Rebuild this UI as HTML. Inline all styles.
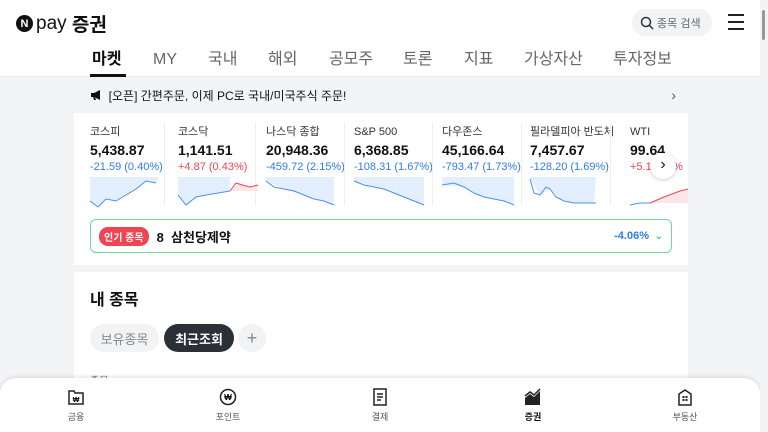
<!DOCTYPE html>
<html><head><meta charset="utf-8"><style>
*{margin:0;padding:0;box-sizing:border-box}
body{width:768px;height:432px;overflow:hidden;background:#f3f4f6;font-family:"Liberation Sans","Noto Sans CJK KR",sans-serif;color:#111;position:relative}
.hdr{position:absolute;left:0;top:0;width:760px;height:77px;background:#fff;border-bottom:1px solid #e8e9eb}
.logo{position:absolute;left:16px;top:10px;display:flex;align-items:center;font-size:19px;font-weight:bold}
.logo .n{width:17px;height:17px;border-radius:50%;background:#111;color:#fff;font-size:11px;display:flex;align-items:center;justify-content:center;margin-right:3px}
.search{position:absolute;left:632px;top:9px;width:80px;height:27px;border-radius:14px;background:#f2f3f5;font-size:11px;color:#666;display:flex;align-items:center;padding-left:8px}
.menu{position:absolute;left:728px;top:14px;width:16px}
.menu i{display:block;height:2px;background:#222;margin-bottom:5px}
.tabs{position:absolute;top:50px;left:0;font-size:16px;color:#666}
.tabs span{position:absolute;white-space:nowrap;display:block;line-height:20px;top:0}
.tabs .on{color:#111;font-weight:bold}
.uline{position:absolute;left:90px;top:74px;width:36px;height:3px;background:#111}
.banner{position:absolute;left:74px;top:80px;width:614px;height:30px;font-size:12px;display:flex;align-items:center;padding-left:16px}
.card{position:absolute;left:74px;background:#fff;width:614px}
.idx{position:absolute;top:12px;font-size:11px;line-height:14px}
.idx .nm{color:#333}
.idx .v{font-size:14px;font-weight:bold;margin-top:3px;line-height:16px}
.idx .c{margin-top:2px}
.blue{color:#2f7be9}.red{color:#f04452}
.sep{position:absolute;top:10px;width:1px;height:82px;background:#eee}
.pop{position:absolute;left:16px;top:106px;width:582px;height:34px;border:1px solid #6fd89a;border-radius:6px;display:flex;align-items:center;padding-left:8px;font-size:13px;font-weight:bold}
.badge{background:#f04452;color:#fff;font-size:10px;padding:2px 5px;border-radius:9px;margin-right:8px}
.chip{position:absolute;top:52px;height:28px;border-radius:14px;font-size:13px;display:flex;align-items:center;justify-content:center}
.nav{position:absolute;left:0;top:378px;width:760px;height:54px;background:#fff;border-radius:16px 16px 0 0;box-shadow:0 -1px 4px rgba(0,0,0,.12)}
.ni{position:absolute;top:10px;width:60px;text-align:center;font-size:9px;color:#555}
.ni svg{display:block;margin:0 auto 4px}
.sb{position:absolute;left:760px;top:0;width:8px;height:432px;background:#f3f4f6}
.sb i{position:absolute;left:2px;top:10px;width:3px;height:30px;background:#999;border-radius:2px}
</style></head><body>
<div class="hdr">
 <div class="logo"><div class="n">N</div><span style="font-weight:normal">pay</span>&nbsp;증권</div>
 <div class="search"><svg width="14" height="14" viewBox="0 0 14 14"><circle cx="6" cy="6" r="4.5" fill="none" stroke="#333" stroke-width="1.5"/><path d="M9.3 9.3L13 13" stroke="#333" stroke-width="1.5"/></svg>&nbsp;종목 검색</div>
 <div class="menu"><i></i><i></i><i></i></div>
 <div class="tabs">
  <span class="on" style="left:92px">마켓</span><span style="left:153px">MY</span><span style="left:208px">국내</span><span style="left:268px">해외</span><span style="left:329px">공모주</span><span style="left:403px">토론</span><span style="left:464px">지표</span><span style="left:524px">가상자산</span><span style="left:613px">투자정보</span>
 </div>
 <div class="uline"></div>
</div>
<div class="banner"><svg width="12" height="12" viewBox="0 0 12 12"><path d="M1 4h3l6-3v10L4 8H1z M3 8l1 3h2L5 8z" fill="#111"/></svg>&nbsp;&nbsp;[오픈] 간편주문, 이제 PC로 국내/미국주식 주문!<span style="position:absolute;right:12px;font-size:14px;color:#555">›</span></div>
<div class="card" style="top:113px;height:152px">
 <div class="idx" style="left:16px"><div class="nm">코스피</div><div class="v">5,438.87</div><div class="c blue">-21.59 (0.40%)</div></div>
 <div class="sep" style="left:90px"></div>
 <div class="idx" style="left:104px"><div class="nm">코스닥</div><div class="v">1,141.51</div><div class="c red">+4.87 (0.43%)</div></div>
 <div class="sep" style="left:181px"></div>
 <div class="idx" style="left:192px"><div class="nm">나스닥 종합</div><div class="v">20,948.36</div><div class="c blue">-459.72 (2.15%)</div></div>
 <div class="sep" style="left:270px"></div>
 <div class="idx" style="left:280px"><div class="nm">S&amp;P 500</div><div class="v">6,368.85</div><div class="c blue">-108.31 (1.67%)</div></div>
 <div class="sep" style="left:358px"></div>
 <div class="idx" style="left:368px"><div class="nm">다우존스</div><div class="v">45,166.64</div><div class="c blue">-793.47 (1.73%)</div></div>
 <div class="sep" style="left:447px"></div>
 <div class="idx" style="left:456px"><div class="nm">필라델피아 반도체</div><div class="v">7,457.67</div><div class="c blue">-128.20 (1.69%)</div></div>
 <div class="sep" style="left:536px"></div>
 <div class="idx" style="left:556px"><div class="nm">WTI</div><div class="v">99.64</div><div class="c red">+5.1&nbsp;&nbsp;&nbsp;&nbsp;&nbsp;6%</div></div>
 <svg style="position:absolute;left:0;top:64px" width="614" height="32">
  <g fill="#e3efff" stroke="#4a90ea" stroke-width="1">
   <path d="M16 24 L24 30 L32 22 L42 24 L52 18 L62 12 L72 4 L82 6 L84 4 L84 0 L16 0Z" stroke="none"/>
   <polyline fill="none" points="16,24 24,30 32,22 42,24 52,18 62,12 72,4 82,6"/>
   <path d="M104 18 L112 28 L122 20 L132 18 L144 16 L156 14 L156 0 L104 0Z" stroke="none"/>
   <polyline fill="none" points="104,18 112,28 122,20 132,18 144,16 156,14"/>
   <path d="M192 4 L210 12 L230 18 L250 24 L260 28 L260 0 L192 0Z" stroke="none"/>
   <polyline fill="none" points="192,4 200,10 210,12 220,14 230,18 240,22 250,24 260,28"/>
   <path d="M280 4 L300 10 L320 16 L340 24 L350 28 L350 0 L280 0Z" stroke="none"/>
   <polyline fill="none" points="280,4 290,8 300,10 310,12 320,16 330,20 340,24 350,28"/>
   <path d="M368 8 L390 10 L410 20 L430 24 L440 28 L440 0 L368 0Z" stroke="none"/>
   <polyline fill="none" points="368,8 380,6 390,10 400,16 410,20 420,22 430,24 440,28"/>
   <path d="M456 2 L466 18 L476 12 L486 22 L500 26 L520 26 L522 0 L456 0Z" stroke="none"/>
   <polyline fill="none" points="456,2 460,16 466,18 472,10 476,12 482,20 490,24 500,26 510,26 522,26"/>
   <polyline fill="none" points="556,28 566,26 576,26"/>
  </g>
  <path d="M156 14 L166 6 L176 10 L184 8 L184 14Z" fill="#fde6e8"/>
  <polyline fill="none" stroke="#f04452" points="156,14 162,6 168,8 176,10 184,8"/>
  <path d="M576 26 L590 20 L606 14 L614 12 L614 26Z" fill="#fde6e8"/>
  <polyline fill="none" stroke="#f04452" points="576,26 590,20 606,14 614,12"/>
 </svg>
 <div style="position:absolute;left:576px;top:40px;width:26px;height:26px;border-radius:50%;background:#fff;box-shadow:0 1px 4px rgba(0,0,0,.2);text-align:center;line-height:24px;font-size:16px">›</div>
 <div class="pop"><span class="badge">인기 종목</span>8&nbsp;&nbsp;삼천당제약<span class="blue" style="position:absolute;right:22px;font-size:11px">-4.06%</span><span style="position:absolute;right:8px;color:#4fd083;font-size:10px">⌄</span></div>
</div>
<div class="card" style="top:272px;height:110px">
 <div style="position:absolute;left:16px;top:14px;font-size:16px;font-weight:bold">내 종목</div>
 <div class="chip" style="left:16px;width:69px;background:#f2f3f5;color:#888">보유종목</div>
 <div class="chip" style="left:90px;width:70px;background:#2b2f36;color:#fff;font-weight:bold">최근조회</div>
 <div class="chip" style="left:164px;width:28px;background:#f2f3f5;color:#888;font-size:18px">+</div>
 <div style="position:absolute;left:16px;top:100px;font-size:10px;color:#777">종목</div>
</div>
<div class="nav">
 <div class="ni" style="left:46px"><svg width="18" height="18" viewBox="0 0 18 18"><path d="M2 3h5l1 2h8v11H2z" fill="none" stroke="#222" stroke-width="1.5"/><text x="9" y="14" font-size="7" text-anchor="middle" font-weight="bold">₩</text></svg>금융</div>
 <div class="ni" style="left:198px"><svg width="18" height="18" viewBox="0 0 18 18"><circle cx="9" cy="9" r="7.5" fill="none" stroke="#222" stroke-width="1.5"/><text x="9" y="12" font-size="8" text-anchor="middle" font-weight="bold">₩</text></svg>포인트</div>
 <div class="ni" style="left:350px"><svg width="18" height="18" viewBox="0 0 18 18"><path d="M3 1h12v16H3z M6 6h6M6 9h6M6 12h4" fill="none" stroke="#222" stroke-width="1.5"/></svg>결제</div>
 <div class="ni" style="left:503px;color:#111;font-weight:bold"><svg width="18" height="18" viewBox="0 0 18 18"><path d="M1 17V10l5-4 4 3 6-6v14z" fill="#222"/><path d="M1 8l5-4 4 3 6-6" fill="none" stroke="#222" stroke-width="1.5"/></svg>증권</div>
 <div class="ni" style="left:655px"><svg width="18" height="18" viewBox="0 0 18 18"><path d="M3 6l6-4 6 4v11H3z" fill="none" stroke="#222" stroke-width="1.5"/><rect x="6.5" y="8" width="2" height="2" fill="#222"/><rect x="9.5" y="8" width="2" height="2" fill="#222"/><rect x="6.5" y="11" width="2" height="2" fill="#222"/><rect x="9.5" y="11" width="2" height="2" fill="#222"/></svg>부동산</div>
</div>
<div class="sb"><i></i></div>
</body></html>
